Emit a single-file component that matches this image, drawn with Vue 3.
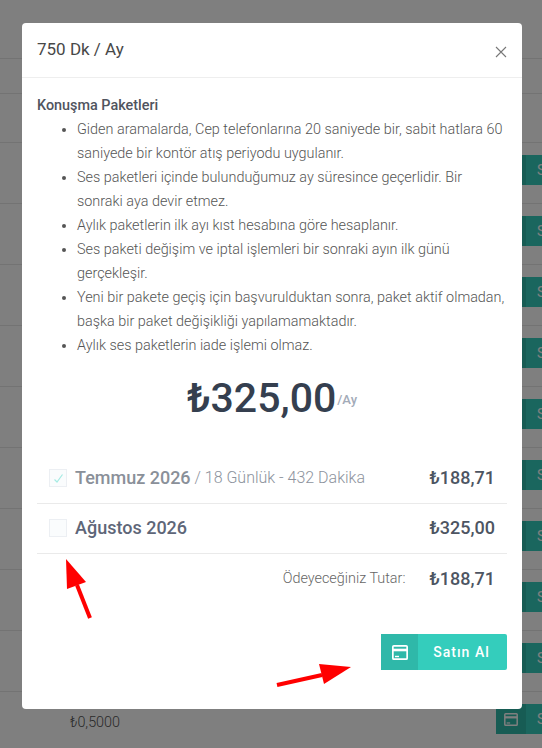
<template>
  <div class="page">
    <div class="top-row" style="height: 58px"></div>
    <div class="top-row" style="height: 34px"></div>
    <div class="top-row" style="height: 48px"></div>
    <div v-for="(row, i) in pageRows" :key="i" class="page-row">
      <span class="page-price">{{ row }}</span>
      <button class="buy-btn small">
        <span class="buy-icon">
          <svg width="14" height="13" viewBox="0 0 16 15" fill="none" stroke="currentColor" stroke-width="1.7">
            <rect x="0.85" y="0.85" width="14.3" height="13.3" rx="1" />
            <path d="M1 5h14" stroke-width="2.6" />
            <path d="M3 11.5h4" stroke-width="1.4" />
          </svg>
        </span>
        <span class="buy-text">Satın Al</span>
      </button>
    </div>
  </div>

  <div class="backdrop">
    <div class="modal">
      <div class="modal-header">
        <h5>750 Dk / Ay</h5>
        <svg class="close" width="12" height="12" viewBox="0 0 12 12" fill="none" stroke="currentColor" stroke-width="1.1">
          <path d="M1 1l10 10M11 1L1 11" />
        </svg>
      </div>
      <div class="modal-body">
        <strong>Konuşma Paketleri</strong>
        <ul>
          <li v-for="item in rules" :key="item">{{ item }}</li>
        </ul>

        <div class="price">
          <span class="price-value">₺325,00</span><span class="price-unit">/Ay</span>
        </div>

        <div class="month-row first">
          <span class="check">
            <svg width="11" height="10" viewBox="0 0 11 10" fill="none" stroke="#a5ebe3" stroke-width="1.2">
              <path d="M1.5 6.5l2.5 2.5L9.5 1.5" />
            </svg>
          </span>
          <span class="month faded">Temmuz 2026</span>
          <span class="month-note">&nbsp;/ 18 Günlük - 432 Dakika</span>
          <span class="amount">₺188,71</span>
        </div>
        <div class="month-row">
          <span class="check"></span>
          <span class="month">Ağustos 2026</span>
          <span class="amount">₺325,00</span>
        </div>
        <div class="total-row">
          <span class="total-label">Ödeyeceğiniz Tutar:</span>
          <span class="amount">₺188,71</span>
        </div>

        <div class="actions">
          <button class="buy-btn">
            <span class="buy-icon">
              <svg width="16" height="15" viewBox="0 0 16 15" fill="none" stroke="currentColor" stroke-width="1.7">
                <rect x="0.85" y="0.85" width="14.3" height="13.3" rx="1" />
                <path d="M1 5h14" stroke-width="2.6" />
                <path d="M3 11.5h4" stroke-width="1.4" />
              </svg>
            </span>
            <span class="buy-text">Satın Al</span>
          </button>
        </div>
      </div>
    </div>

    <!-- red annotation arrows drawn on top of the screenshot -->
    <svg class="arrows" width="542" height="748" viewBox="0 0 542 748">
      <path d="M90 618L77 585" stroke="#f00" stroke-width="4" />
      <path d="M66 559L67 589L86 582Z" fill="#f00" />
      <path d="M277 685L322 675" stroke="#f00" stroke-width="4" />
      <path d="M351 667L319 664L324 684Z" fill="#f00" />
    </svg>
  </div>
</template>

<script setup>
const rules = [
  'Giden aramalarda, Cep telefonlarına 20 saniyede bir, sabit hatlara 60 saniyede bir kontör atış periyodu uygulanır.',
  'Ses paketleri içinde bulunduğumuz ay süresince geçerlidir. Bir sonraki aya devir etmez.',
  'Aylık paketlerin ilk ayı kıst hesabına göre hesaplanır.',
  'Ses paketi değişim ve iptal işlemleri bir sonraki ayın ilk günü gerçekleşir.',
  'Yeni bir pakete geçiş için başvurulduktan sonra, paket aktif olmadan, başka bir paket değişikliği yapılamamaktadır.',
  'Aylık ses paketlerin iade işlemi olmaz.'
]

const pageRows = ['', '', '', '', '', '', '', '', '', '₺0,5000']
</script>

<style scoped>
.page {
  width: 542px;
  height: 748px;
  overflow: hidden;
  background: #fff;
}

.top-row {
  border-bottom: 1px solid #e6e6e6;
}

.page-row {
  position: relative;
  display: flex;
  justify-content: space-between;
  align-items: flex-start;
  height: 48px;
  padding: 12px 0 0 70px;
  border-bottom: 1px solid #e6e6e6;
}

.page-price {
  margin-top: 10px;
  font-size: 14.4px;
  font-weight: 300;
  color: #555;
}

.backdrop {
  position: fixed;
  inset: 0;
  background: rgba(0, 0, 0, 0.5);
  font-family: Roboto, "Liberation Sans", sans-serif;
}

.modal {
  width: 500px;
  margin: 23px 0 0 22px;
  background: #fff;
  border-radius: 4px;
}

.modal-header {
  display: flex;
  justify-content: space-between;
  height: 54px;
  padding: 0 15px;
  border-bottom: 1px solid #eee;
}

.modal-header h5 {
  margin: 0;
  font-size: 17px;
  font-weight: 400;
  line-height: 53px;
  color: #484848;
}

.close {
  margin-top: 23px;
  color: #777;
}

.modal-body {
  padding: 16px 15px 15px;
  font-size: 14.4px;
  line-height: 24px;
  font-weight: 300;
  color: #555;
}

.modal-body strong {
  display: block;
  font-weight: 500;
  color: #50545e;
}

ul {
  margin: 0;
  padding-left: 40px;
}

.price {
  display: flex;
  justify-content: center;
  align-items: flex-start;
  height: 48px;
  margin-top: 16px;
  color: #353f4f;
}

.price-value {
  font-size: 41px;
  line-height: 48px;
  font-weight: 500;
}

.price-unit {
  margin-top: 19px;
  margin-left: 1px;
  font-size: 13px;
  line-height: 14px;
  font-weight: 500;
  color: #a3abb8;
}

.month-row {
  display: flex;
  align-items: center;
  box-sizing: border-box;
  height: 50px;
  padding: 0 12px 2px;
  border-bottom: 1px solid #eaeaea;
}

.month-row.first {
  margin-top: 32px;
}

.check {
  display: flex;
  align-items: center;
  justify-content: center;
  width: 18px;
  height: 18px;
  margin-right: 8px;
  box-sizing: border-box;
  border: 1px solid #eceff3;
  background: #fafcfd;
}

.month {
  font-size: 18px;
  font-weight: 500;
  color: #5e6678;
}

.month.faded {
  color: #8a9099;
}

.month-note {
  font-size: 16px;
  color: #8d939d;
}

.amount {
  margin-left: auto;
  font-size: 18px;
  font-weight: 500;
  color: #4d5562;
}

.total-row {
  display: flex;
  align-items: center;
  height: 49px;
  padding: 0 12px;
}

.total-label {
  margin-left: auto;
  font-size: 14.4px;
  color: #666;
}

.total-row .amount {
  margin-left: 24px;
}

.actions {
  display: flex;
  justify-content: flex-end;
  margin-top: 31px;
  padding-bottom: 24px;
}

.buy-btn {
  display: flex;
  align-items: stretch;
  flex-shrink: 0;
  width: 126px;
  height: 36px;
  padding: 0;
  border: none;
  border-radius: 2px;
  background: #34cdbc;
  color: #fff;
  font-family: Roboto, "Liberation Sans", sans-serif;
}

.buy-btn.small {
  height: 30px;
  margin-right: -80px;
}

.buy-icon {
  display: flex;
  align-items: center;
  justify-content: center;
  width: 37px;
  background: #2fb8a9;
}

.buy-btn.small .buy-icon {
  width: 30px;
}

.buy-text {
  flex: 1;
  padding-right: 2px;
  font-size: 14px;
  font-weight: 500;
  letter-spacing: 1px;
  line-height: 36px;
  text-align: center;
}

.buy-btn.small .buy-text {
  line-height: 30px;
  font-weight: 400;
  text-align: left;
  margin-left: 11px;
}

.arrows {
  position: absolute;
  left: 0;
  top: 0;
}
</style>

<style>
body {
  overflow: hidden;
  font-family: Roboto, "Liberation Sans", sans-serif;
}
</style>
